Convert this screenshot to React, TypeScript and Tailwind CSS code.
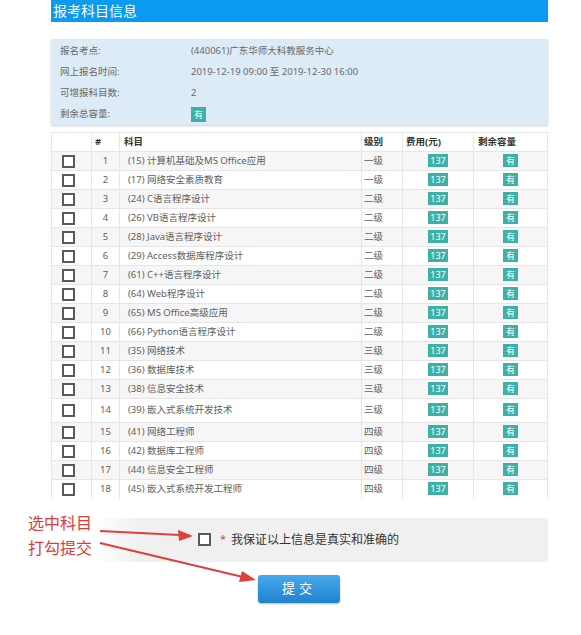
import React from "react";

const subjects = [
  { no: 1, name: "(15) 计算机基础及MS Office应用", level: "一级" },
  { no: 2, name: "(17) 网络安全素质教育", level: "一级" },
  { no: 3, name: "(24) C语言程序设计", level: "二级" },
  { no: 4, name: "(26) VB语言程序设计", level: "二级" },
  { no: 5, name: "(28) Java语言程序设计", level: "二级" },
  { no: 6, name: "(29) Access数据库程序设计", level: "二级" },
  { no: 7, name: "(61) C++语言程序设计", level: "二级" },
  { no: 8, name: "(64) Web程序设计", level: "二级" },
  { no: 9, name: "(65) MS Office高级应用", level: "二级" },
  { no: 10, name: "(66) Python语言程序设计", level: "二级" },
  { no: 11, name: "(35) 网络技术", level: "三级" },
  { no: 12, name: "(36) 数据库技术", level: "三级" },
  { no: 13, name: "(38) 信息安全技术", level: "三级" },
  { no: 14, name: "(39) 嵌入式系统开发技术", level: "三级" },
  { no: 15, name: "(41) 网络工程师", level: "四级" },
  { no: 16, name: "(42) 数据库工程师", level: "四级" },
  { no: 17, name: "(44) 信息安全工程师", level: "四级" },
  { no: 18, name: "(45) 嵌入式系统开发工程师", level: "四级" },
];

function Badge({ text, w }: { text: string; w: string }) {
  return (
    <span className={"inline-flex items-center justify-center h-[13px] bg-[#3fb0a5] text-white text-[9px] leading-none " + w}>
      {text}
    </span>
  );
}

function Box() {
  return <span className="block w-[13px] h-[13px] border-2 border-[#5a5a5a] bg-white" />;
}

export default function App() {
  return (
    <div
      className="relative w-[581px] h-[635px] bg-white overflow-hidden"
      style={{ fontFamily: '"Noto Sans", "Noto Sans CJK SC", sans-serif' }}
    >
      <div className="ml-[51px] w-[497px]">
        <div className="h-[22px] bg-[#0a9bf0] text-white text-[14px] leading-[22px] pl-[2px]">报考科目信息</div>

        <div className="mt-[17px] h-[86px] bg-[#dcebf5] shadow-[0_1px_2px_rgba(0,0,0,0.2)] pt-[2px] text-[9.5px] text-[#6a6a6a]">
          <div className="flex h-[21px] items-center">
            <span className="w-[140px] pl-[9px]">报名考点:</span>
            <span>(440061)广东华师大科教服务中心</span>
          </div>
          <div className="flex h-[21px] items-center">
            <span className="w-[140px] pl-[9px]">网上报名时间:</span>
            <span>2019-12-19 09:00 至 2019-12-30 16:00</span>
          </div>
          <div className="flex h-[21px] items-center">
            <span className="w-[140px] pl-[9px]">可增报科目数:</span>
            <span>2</span>
          </div>
          <div className="flex h-[21px] items-center">
            <span className="w-[140px] pl-[9px]">剩余总容量:</span>
            <span className="inline-flex items-center justify-center w-[15px] h-[15px] bg-[#3fb0a5] text-white text-[9px]">有</span>
          </div>
        </div>

        <table className="mt-[7px] w-[496px] table-fixed border-collapse text-[9.5px] text-[#5e5e5e]">
          <colgroup>
            <col className="w-[40px]" />
            <col className="w-[28px]" />
            <col className="w-[242px]" />
            <col className="w-[41px]" />
            <col className="w-[71px]" />
            <col className="w-[74px]" />
          </colgroup>
          <thead>
            <tr className="h-[19px] text-left font-bold text-[#333] border-t border-[#e6e6e6]">
              <th className="border-x border-[#e6e6e6]"></th>
              <th className="pl-[3px] border-r border-[#e6e6e6]">#</th>
              <th className="pl-[4px] border-r border-[#e6e6e6]">科目</th>
              <th className="pl-[2px] border-r border-[#e6e6e6]">级别</th>
              <th className="pl-[3px] border-r border-[#e6e6e6]">费用(元)</th>
              <th className="pl-[4px] border-r border-[#e6e6e6]">剩余容量</th>
            </tr>
          </thead>
          <tbody>
            {subjects.map((s) => (
              <tr
                key={s.no}
                className={
                  (s.no % 2 === 1 ? "bg-[#f6f6f6] " : "bg-white ") +
                  (s.no === 14 ? "h-[24px] " : "h-[19px] ") +
                  "border-t border-[#e6e6e6]"
                }
              >
                <td className="border-x border-[#e6e6e6] pl-[10px]">
                  <Box />
                </td>
                <td className="text-center border-r border-[#e6e6e6]">{s.no}</td>
                <td className="pl-[8px] border-r border-[#e6e6e6] whitespace-nowrap">{s.name}</td>
                <td className="pl-[2px] border-r border-[#e6e6e6]">{s.level}</td>
                <td className="text-center border-r border-[#e6e6e6]">
                  <Badge text="137" w="w-[20px]" />
                </td>
                <td className="text-center border-r border-[#e6e6e6]">
                  <Badge text="有" w="w-[15px]" />
                </td>
              </tr>
            ))}
          </tbody>
        </table>
      </div>

      <div className="mt-[19px] ml-[95px] w-[453px] h-[44px] bg-gradient-to-r from-white to-[#f0f0f0] to-[10%] flex items-center pl-[103px]">
        <Box />
        <span className="ml-[9px] text-[#e04848] text-[11px]">*</span>
        <span className="ml-[5px] text-[12px] text-[#333]">我保证以上信息是真实和准确的</span>
      </div>

      <div className="mt-[13px] ml-[258px]">
        <button className="w-[82px] h-[28px] rounded-[3px] bg-gradient-to-b from-[#47a9eb] to-[#1e82cf] text-white text-[13px] tracking-[4px] shadow-[0_1px_2px_rgba(0,0,0,0.25)]">
          提交
        </button>
      </div>

      <div className="absolute left-[28px] top-[511px] text-[#d9403a] text-[16px] leading-[25px]">
        <div>选中科目</div>
        <div>打勾提交</div>
      </div>

      <svg className="absolute left-0 top-0" width="581" height="635" viewBox="0 0 581 635">
        <line x1="100" y1="531" x2="180" y2="535" stroke="#e0403a" strokeWidth="2" />
        <polygon points="193,536 178,530 179,541" fill="#e0403a" />
        <line x1="100" y1="543" x2="243" y2="577" stroke="#e0403a" strokeWidth="2" />
        <polygon points="256,580 242,571 239,582" fill="#e0403a" />
      </svg>
    </div>
  );
}
